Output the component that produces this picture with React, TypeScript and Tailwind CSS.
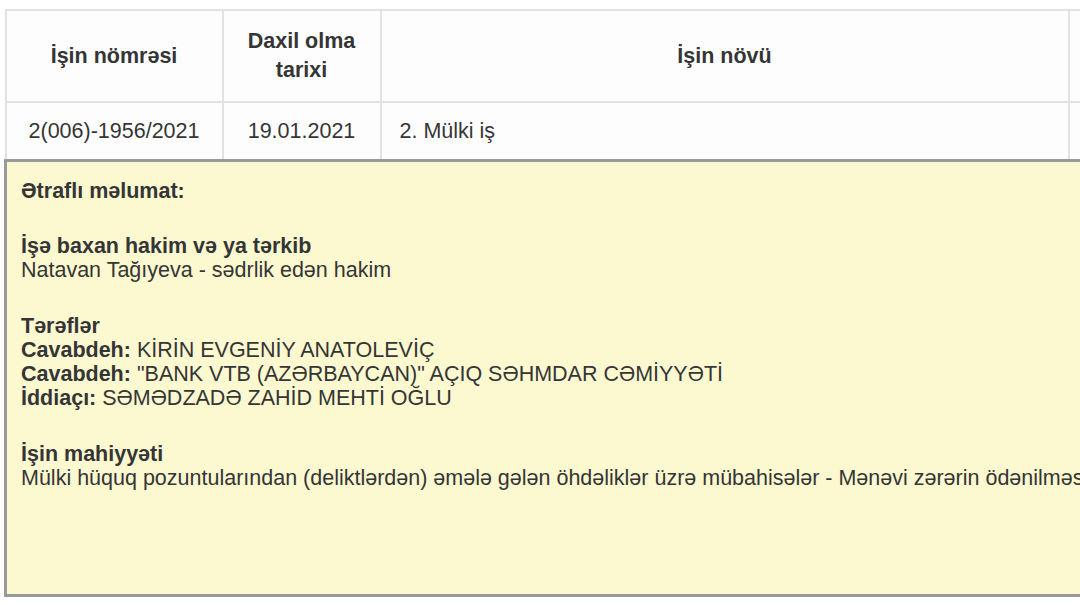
const head = "border-2 border-[#e2e2e2] font-bold leading-[29px] text-center align-middle";
const cell = "border-2 border-[#e2e2e2] align-middle";

const parties = [
  ["Cavabdeh:", "KİRİN EVGENİY ANATOLEVİÇ"],
  ["Cavabdeh:", "\"BANK VTB (AZƏRBAYCAN)\" AÇIQ SƏHMDAR CƏMİYYƏTİ"],
  ["İddiaçı:", "SƏMƏDZADƏ ZAHİD MEHTİ OĞLU"],
] as const;

export default function App() {
  return (
    <div className="h-[603px] w-[1080px] overflow-hidden bg-white font-['Liberation_Sans',Arial,sans-serif] text-[21.5px] text-[#353535]">
      <div className="pl-[4px] pt-[9px]">
        <table className="w-[1200px] table-fixed border-collapse bg-[#fdfdfe]">
          <colgroup>
            <col className="w-[217px]" />
            <col className="w-[158px]" />
            <col className="w-[688px]" />
            <col />
          </colgroup>
          <thead>
            <tr className="h-[92px]">
              <th className={head}>İşin nömrəsi</th>
              <th className={head}>
                Daxil olma
                <br />
                tarixi
              </th>
              <th className={head}>İşin növü</th>
              <th className={head}></th>
            </tr>
          </thead>
          <tbody>
            <tr className="h-[58px]">
              <td className={cell + " text-center"}>2(006)-1956/2021</td>
              <td className={cell + " text-center"}>19.01.2021</td>
              <td className={cell + " pl-[18px]"}>2. Mülki iş</td>
              <td className={cell}></td>
            </tr>
            <tr>
              <td
                colSpan={4}
                className="border-y-[3px] border-l-[3px] border-[#9a9a9a] bg-[#fcf9d1] pb-[104px] pl-[14px] pt-[17px] leading-6"
              >
                <div className="font-bold">Ətraflı məlumat:</div>

                <div className="mt-[31px]">
                  <div className="font-bold">İşə baxan hakim və ya tərkib</div>
                  <div>Natavan Tağıyeva - sədrlik edən hakim</div>
                </div>

                <div className="mt-8">
                  <div className="font-bold">Tərəflər</div>
                  {parties.map(([role, name], i) => (
                    <div key={i}>
                      <span className="font-bold">{role}</span> {name}
                    </div>
                  ))}
                </div>

                <div className="mt-8">
                  <div className="font-bold">İşin mahiyyəti</div>
                  <div className="whitespace-nowrap">
                    Mülki hüquq pozuntularından (deliktlərdən) əmələ gələn öhdəliklər üzrə mübahisələr - Mənəvi zərərin ödənilməsi
                  </div>
                </div>
              </td>
            </tr>
          </tbody>
        </table>
      </div>
    </div>
  );
}
